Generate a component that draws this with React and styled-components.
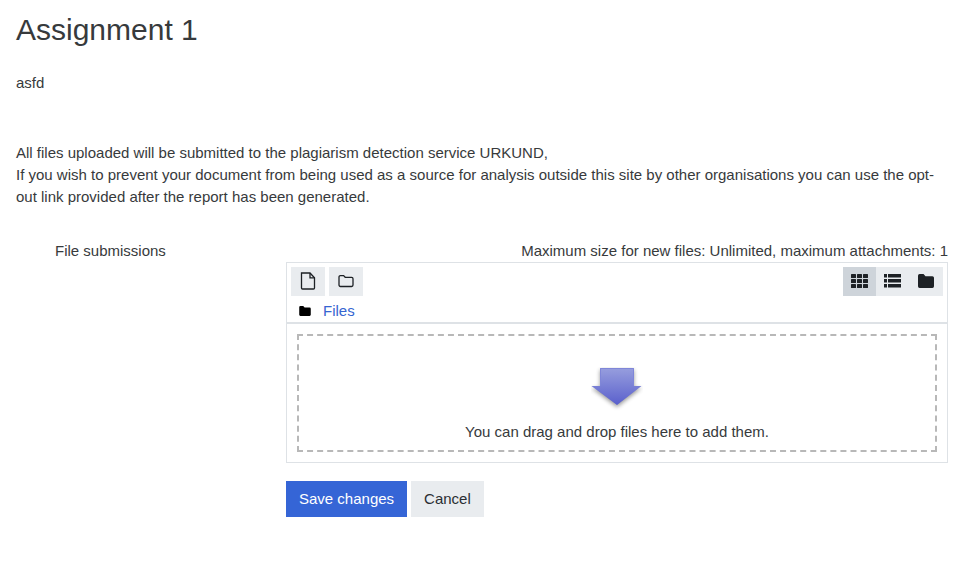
import React from "react";
import styled, { createGlobalStyle } from "styled-components";

const Global = createGlobalStyle`
  html, body { margin: 0; padding: 0; background: #fff; }
  body {
    font-family: "Liberation Sans", Arial, sans-serif;
    font-size: 15px;
    line-height: 22.5px;
    color: #373a3c;
  }
`;

const Page = styled.main`
  padding: 8px 18px 0 16px;
  width: 966px;
  height: 569px;
  box-sizing: border-box;
  overflow: hidden;
`;
const Title = styled.h2`
  margin: 0;
  font-size: 30px;
  font-weight: 400;
  line-height: 44px;
  color: #373a3c;
`;
const Intro = styled.p`
  margin: 20px 0 0;
`;
const Notice = styled.p`
  margin: 47px 0 0;
  line-height: 22px;
`;
const FormRow = styled.div`
  display: grid;
  grid-template-columns: 270px 662px;
  margin-top: 32.5px;
`;
const Label = styled.div`
  padding-left: 39px;
`;
const Limits = styled.div`
  text-align: right;
  height: 22px;
`;
const Manager = styled.div`
  border: 1px solid #dee2e6;
  height: 201px;
  box-sizing: border-box;
  display: flex;
  flex-direction: column;
`;
const Toolbar = styled.div`
  display: flex;
  justify-content: space-between;
  padding: 4px 4px 0;
`;
const Group = styled.div`
  display: flex;
  gap: ${(p) => p.$gap || 0}px;
`;
const ToolButton = styled.button`
  width: ${(p) => p.$w || 34}px;
  height: 29px;
  padding: 0 0 2px;
  border: 0;
  border-radius: 0;
  background: ${(p) => (p.$active ? "#ced4da" : "#e9ecef")};
  color: #1d2125;
  display: flex;
  align-items: center;
  justify-content: center;
`;
const PathBar = styled.div`
  display: flex;
  align-items: center;
  height: 22px;
  padding: 4px 0 0 12px;
  gap: 12px;
  border-bottom: 2px solid #dee2e6;
`;
const PathLink = styled.a`
  color: #3565d1;
  text-decoration: none;
`;
const DropArea = styled.div`
  flex: 1;
  padding: 10px;
  display: flex;
`;
const Dashed = styled.div`
  flex: 1;
  border: 2px dashed #b8b8b8;
  display: flex;
  flex-direction: column;
  align-items: center;
  text-align: center;
`;
const DropIcon = styled.svg`
  margin-top: 31px;
  display: block;
`;
const DropText = styled.div`
  margin-top: 10px;
`;
const Actions = styled.div`
  display: flex;
  gap: 4px;
  margin: 18px 0 0 270px;
`;
const Button = styled.button`
  height: 36px;
  padding: 0 13px;
  border: 0;
  border-radius: 0;
  font: inherit;
  background: ${(p) => (p.$primary ? "#3565d6" : "#e9ecef")};
  color: ${(p) => (p.$primary ? "#fff" : "#2b2f33")};
`;
const BlackFolder = styled.span`
  color: #000;
  display: flex;
`;

const FileIcon = () => (
  <svg width="16" height="18" viewBox="0 0 16 18" fill="none" stroke="currentColor" strokeWidth="1.3">
    <path d="M1.500 1h8.500l4.500 4.800V16a1 1 0 0 1-1 1h-11a1 1 0 0 1-1-1z" />
    <path d="M10 1v4.800h4.500" />
  </svg>
);
const FolderOutline = () => (
  <svg width="16" height="14" viewBox="0 0 16 14" fill="none" stroke="currentColor" strokeWidth="1.3">
    <path d="M1 3a1.4 1.4 0 0 1 1.4-1.4h3.2l1.6 1.700h6.400A1.400 1.400 0 0 1 15 4.700v6.400a1.400 1.400 0 0 1-1.400 1.400H2.400A1.400 1.400 0 0 1 1 11.100z" />
  </svg>
);
const GridIcon = () => (
  <svg width="17" height="14" viewBox="0 0 17 14" fill="currentColor">
    {[0, 6, 12].map((x) =>
      [0, 5, 10].map((y) => <rect key={`${x}-${y}`} x={x} y={y} width="5" height="4" rx="0.500" />)
    )}
  </svg>
);
const ListIcon = () => (
  <svg width="17" height="14" viewBox="0 0 17 14" fill="currentColor">
    {[0, 5, 10].map((y) => (
      <g key={y}>
        <rect x="0" y={y} width="3" height="3.500" />
        <rect x="4" y={y} width="13" height="3.500" />
      </g>
    ))}
  </svg>
);
const FolderSolid = ({ w = 16, h = 14 }) => (
  <svg width={w} height={h} viewBox="0 0 15 13" fill="currentColor">
    <path d="M0 1.500A1.500 1.500 0 0 1 1.500 0h3.700L7 2h6.500A1.500 1.500 0 0 1 15 3.500v8A1.500 1.500 0 0 1 13.500 13h-12A1.500 1.500 0 0 1 0 11.500z" />
  </svg>
);
const ArrowIcon = () => (
  <DropIcon width="52" height="44" viewBox="0 0 52 44">
    <defs>
      <linearGradient id="arrowFill" x1="0" y1="0" x2="0" y2="1">
        <stop offset="0" stopColor="#979ede" />
        <stop offset="1" stopColor="#5a60cc" />
      </linearGradient>
      <filter id="arrowShadow" x="-30%" y="-30%" width="160%" height="170%">
        <feGaussianBlur stdDeviation="2" />
      </filter>
    </defs>
    <path d="M9 1h34v18h7.500L26 38 .5 19H9z" fill="#000" opacity="0.4" transform="translate(0 2)" filter="url(#arrowShadow)" />
    <path d="M9 1h34v18h7.500L26 38 .5 19H9z" fill="url(#arrowFill)" />
    <path d="M9.500 18.500v-17h33v17" fill="none" stroke="#7f86d8" strokeWidth="1" />
  </DropIcon>
);

export default function App() {
  return (
    <>
      <Global />
      <Page>
        <Title>Assignment 1</Title>
        <Intro>asfd</Intro>
        <Notice>
          All files uploaded will be submitted to the plagiarism detection service URKUND,
          <br />
          If you wish to prevent your document from being used as a source for analysis outside this site by other organisations you can use the opt-out link provided after the report has been generated.
        </Notice>
        <FormRow>
          <Label>File submissions</Label>
          <div>
            <Limits>Maximum size for new files: Unlimited, maximum attachments: 1</Limits>
            <Manager>
              <Toolbar>
                <Group $gap={4}>
                  <ToolButton aria-label="Add file"><FileIcon /></ToolButton>
                  <ToolButton aria-label="Create folder"><FolderOutline /></ToolButton>
                </Group>
                <Group>
                  <ToolButton $active $w={33} aria-label="Icons"><GridIcon /></ToolButton>
                  <ToolButton $w={33} aria-label="Details"><ListIcon /></ToolButton>
                  <ToolButton $w={34} aria-label="Tree"><FolderSolid /></ToolButton>
                </Group>
              </Toolbar>
              <PathBar>
                <BlackFolder><FolderSolid w={12} h={10} /></BlackFolder>
                <PathLink href="#">Files</PathLink>
              </PathBar>
              <DropArea>
                <Dashed>
                  <ArrowIcon />
                  <DropText>You can drag and drop files here to add them.</DropText>
                </Dashed>
              </DropArea>
            </Manager>
          </div>
        </FormRow>
        <Actions>
          <Button $primary>Save changes</Button>
          <Button>Cancel</Button>
        </Actions>
      </Page>
    </>
  );
}
